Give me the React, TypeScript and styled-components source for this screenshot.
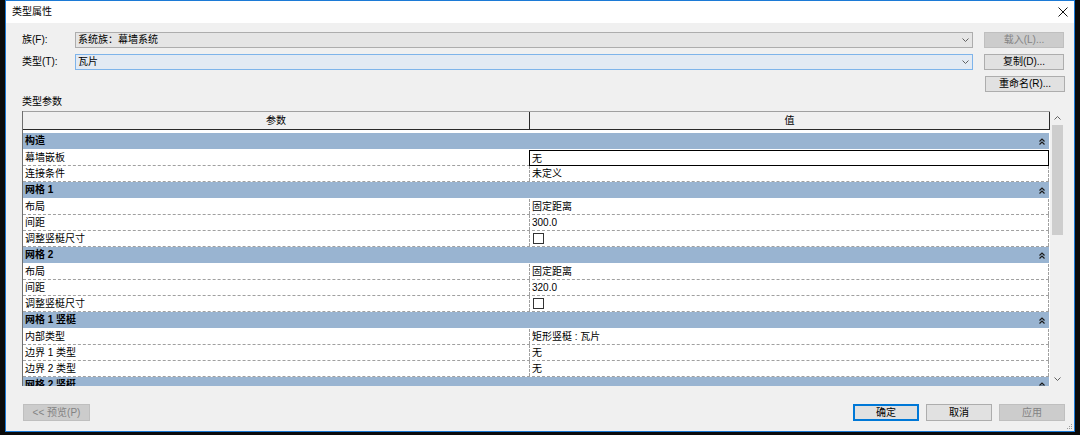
import React from 'react';
import styled, { createGlobalStyle } from 'styled-components';

const GlobalStyle = createGlobalStyle`
  html, body {
    margin: 0;
    padding: 0;
    background: #0b0b0b;
  }
  body {
    font-family: "Liberation Sans", "Noto Sans CJK SC", sans-serif;
    font-size: 10px;
    color: #000;
  }
`;

const Screen = styled.div`
  width: 1080px;
  height: 435px;
  overflow: hidden;
  background: #0b0b0b;
  padding-left: 5px;
  box-sizing: border-box;
`;

const Dialog = styled.div`
  position: relative;
  width: 1070px;
  height: 432px;
  box-sizing: border-box;
  border: 1px solid #1c7ad6;
  background: #f0f0f0;
  display: flex;
  flex-direction: column;
`;

const TitleBar = styled.div`
  flex: none;
  height: 22px;
  background: #fff;
  display: flex;
  align-items: center;
  justify-content: space-between;
  padding-left: 6px;
  line-height: 22px;
`;

const CloseButton = styled.div`
  width: 22px;
  height: 22px;
  display: flex;
  align-items: center;
  justify-content: center;
`;

const Body = styled.div`
  flex: 1;
  display: flex;
  flex-direction: column;
  padding: 9px 9px 10px 16px;
  min-height: 0;
`;

const FieldRow = styled.div<{ $end?: boolean }>`
  display: flex;
  align-items: center;
  height: 16px;
  justify-content: ${(p) => (p.$end ? 'flex-end' : 'flex-start')};
  & + & {
    margin-top: 6px;
  }
`;

const FieldLabel = styled.div`
  width: 53px;
  flex: none;
  line-height: 16px;
`;

const Combo = styled.div<{ $focused?: boolean }>`
  width: 898px;
  height: 16px;
  box-sizing: border-box;
  display: flex;
  align-items: center;
  justify-content: space-between;
  padding: 0 3px 0 2px;
  background: ${(p) => (p.$focused ? '#e3eaf3' : '#e5e5e5')};
  border: 1px solid ${(p) => (p.$focused ? '#7eb4ea' : '#adadad')};
  line-height: 14px;
`;

const SideButton = styled.button<{ $disabled?: boolean }>`
  width: 80px;
  height: 16px;
  margin-left: 11px;
  padding: 0;
  box-sizing: border-box;
  font: inherit;
  line-height: 14px;
  background: ${(p) => (p.$disabled ? '#cccccc' : '#e1e1e1')};
  border: 1px solid ${(p) => (p.$disabled ? '#bfbfbf' : '#adadad')};
  color: ${(p) => (p.$disabled ? '#838383' : '#000')};
`;

const SectionLabel = styled.div`
  margin-top: 2px;
  height: 16px;
  line-height: 16px;
`;

const GridFrame = styled.div`
  flex: none;
  margin-top: 1px;
  height: 275px;
  display: flex;
  border-left: 1px solid #6e6e6e;
  overflow: hidden;
`;

const ListArea = styled.div`
  width: 1027px;
  display: flex;
  flex-direction: column;
  background: #fff;
  overflow: hidden;
`;

const HeaderRow = styled.div`
  flex: none;
  height: 19px;
  box-sizing: border-box;
  display: flex;
  background: #f0f0f0;
  border-top: 1px solid #a0a0a0;
  border-bottom: 1px solid #2a2a2a;
`;

const HeaderCell = styled.div<{ $w?: number }>`
  ${(p) => (p.$w ? `width: ${p.$w}px; flex: none;` : 'flex: 1;')}
  border-right: 1px solid #2a2a2a;
  text-align: center;
  line-height: 17px;
`;

const Rows = styled.div`
  padding-top: 3px;
  width: 1026px;
`;

const CategoryRow = styled.div`
  height: 16px;
  margin-bottom: 1px;
  background: #99b4d1;
  display: flex;
  align-items: center;
  justify-content: space-between;
  padding: 0 4px 0 2px;
  font-weight: bold;
  line-height: 16px;
`;

const ItemRow = styled.div`
  height: 16px;
  box-sizing: border-box;
  display: flex;
  border-bottom: 1px dashed #a0a0a0;
  line-height: 15px;
`;

const ParamCell = styled.div`
  width: 506px;
  flex: none;
  padding-left: 2px;
  box-sizing: border-box;
`;

const ValueCell = styled.div<{ $selected?: boolean }>`
  flex: 1;
  display: flex;
  align-items: center;
  padding-left: 2px;
  box-sizing: border-box;
  border-left: 1px ${(p) => (p.$selected ? 'solid #000' : 'dashed #a0a0a0')};
  border-right: 1px ${(p) => (p.$selected ? 'solid #000' : 'dashed #a0a0a0')};
  ${(p) => (p.$selected ? 'border-top: 1px solid #000; border-bottom: 1px solid #000; margin-bottom: -1px;' : '')}
`;

const Checkbox = styled.span`
  display: inline-block;
  width: 9px;
  height: 9px;
  margin-left: 1px;
  border: 1px solid #333;
  background: #fff;
`;

const Scrollbar = styled.div`
  width: 14px;
  flex: none;
  background: #f0f0f0;
  display: flex;
  flex-direction: column;
  align-items: center;
`;

const ScrollArrow = styled.div`
  height: 14px;
  width: 14px;
  flex: none;
  display: flex;
  align-items: center;
  justify-content: center;
`;

const ScrollTrack = styled.div`
  flex: 1;
  width: 11px;
`;

const ScrollThumb = styled.div`
  height: 110px;
  background: #cdcdcd;
`;

const Footer = styled.div`
  flex: none;
  margin-top: 18px;
  display: flex;
  justify-content: space-between;
  padding-left: 1px;
`;

const ButtonGroup = styled.div`
  display: flex;
  gap: 7px;
`;

const DialogButton = styled.button<{ $variant?: 'default' | 'disabled' | 'normal'; $w?: number }>`
  width: ${(p) => p.$w ?? 66}px;
  height: 17px;
  padding: 0;
  box-sizing: border-box;
  font: inherit;
  line-height: 15px;
  background: ${(p) => (p.$variant === 'disabled' ? '#cccccc' : '#e1e1e1')};
  border: 1px solid
    ${(p) =>
      p.$variant === 'default' ? '#0078d7' : p.$variant === 'disabled' ? '#bfbfbf' : '#adadad'};
  box-shadow: ${(p) => (p.$variant === 'default' ? 'inset 0 0 0 1px #0078d7' : 'none')};
  color: ${(p) => (p.$variant === 'disabled' ? '#838383' : '#000')};
`;

const Grip = styled.svg`
  position: absolute;
  right: 1px;
  bottom: 1px;
`;

const Chevron = ({ up }: { up?: boolean }) => (
  <svg width="7" height="4" viewBox="0 0 7 4">
    <path
      d={up ? 'M0.5 3.5 L3.5 0.5 L6.5 3.5' : 'M0.5 0.5 L3.5 3.5 L6.5 0.5'}
      fill="none"
      stroke="#606060"
      strokeWidth="1"
    />
  </svg>
);

const Collapse = () => (
  <svg width="6" height="7" viewBox="0 0 6 7">
    <path d="M0.5 3.5 L3 1 L5.5 3.5 M0.5 6.5 L3 4 L5.5 6.5" fill="none" stroke="#1a1a1a" strokeWidth="1.2" />
  </svg>
);

type Item = { name: string; value?: string; check?: boolean; selected?: boolean };
type Group = { title: string; items: Item[] };

const groups: Group[] = [
  {
    title: '构造',
    items: [
      { name: '幕墙嵌板', value: '无', selected: true },
      { name: '连接条件', value: '未定义' },
    ],
  },
  {
    title: '网格 1',
    items: [
      { name: '布局', value: '固定距离' },
      { name: '间距', value: '300.0' },
      { name: '调整竖梃尺寸', check: true },
    ],
  },
  {
    title: '网格 2',
    items: [
      { name: '布局', value: '固定距离' },
      { name: '间距', value: '320.0' },
      { name: '调整竖梃尺寸', check: true },
    ],
  },
  {
    title: '网格 1 竖梃',
    items: [
      { name: '内部类型', value: '矩形竖梃 : 瓦片' },
      { name: '边界 1 类型', value: '无' },
      { name: '边界 2 类型', value: '无' },
    ],
  },
  { title: '网格 2 竖梃', items: [] },
];

const App: React.FC = () => {
  return (
    <Screen>
      <GlobalStyle />
      <Dialog>
        <TitleBar>
          <span>类型属性</span>
          <CloseButton>
            <svg width="10" height="10" viewBox="0 0 10 10">
              <path d="M0.5 0.5 L9.5 9.5 M9.5 0.5 L0.5 9.5" stroke="#111" strokeWidth="1" />
            </svg>
          </CloseButton>
        </TitleBar>
        <Body>
          <FieldRow>
            <FieldLabel>族(F):</FieldLabel>
            <Combo>
              <span>系统族：幕墙系统</span>
              <Chevron />
            </Combo>
            <SideButton $disabled>载入(L)...</SideButton>
          </FieldRow>
          <FieldRow>
            <FieldLabel>类型(T):</FieldLabel>
            <Combo $focused>
              <span>瓦片</span>
              <Chevron />
            </Combo>
            <SideButton>复制(D)...</SideButton>
          </FieldRow>
          <FieldRow $end>
            <SideButton>重命名(R)...</SideButton>
          </FieldRow>
          <SectionLabel>类型参数</SectionLabel>
          <GridFrame>
            <ListArea>
              <HeaderRow>
                <HeaderCell $w={506}>参数</HeaderCell>
                <HeaderCell>值</HeaderCell>
              </HeaderRow>
              <Rows>
                {groups.map((g) => (
                  <React.Fragment key={g.title}>
                    <CategoryRow>
                      <span>{g.title}</span>
                      <Collapse />
                    </CategoryRow>
                    {g.items.map((it, i) => (
                      <ItemRow key={i}>
                        <ParamCell>{it.name}</ParamCell>
                        <ValueCell $selected={it.selected}>
                          {it.check ? <Checkbox /> : it.value}
                        </ValueCell>
                      </ItemRow>
                    ))}
                  </React.Fragment>
                ))}
              </Rows>
            </ListArea>
            <Scrollbar>
              <ScrollArrow>
                <Chevron up />
              </ScrollArrow>
              <ScrollTrack>
                <ScrollThumb />
              </ScrollTrack>
              <ScrollArrow>
                <Chevron />
              </ScrollArrow>
            </Scrollbar>
          </GridFrame>
          <Footer>
            <DialogButton $variant="disabled" $w={67}>
              &lt;&lt; 预览(P)
            </DialogButton>
            <ButtonGroup>
              <DialogButton $variant="default">确定</DialogButton>
              <DialogButton>取消</DialogButton>
              <DialogButton $variant="disabled">应用</DialogButton>
            </ButtonGroup>
          </Footer>
        </Body>
        <Grip width="7" height="7" viewBox="0 0 7 7">
          {[
            [5, 1],
            [3, 3],
            [5, 3],
            [1, 5],
            [3, 5],
            [5, 5],
          ].map(([x, y], i) => (
            <rect key={i} x={x} y={y} width="1" height="1" fill="#9a9a9a" />
          ))}
        </Grip>
      </Dialog>
    </Screen>
  );
};

export default App;
